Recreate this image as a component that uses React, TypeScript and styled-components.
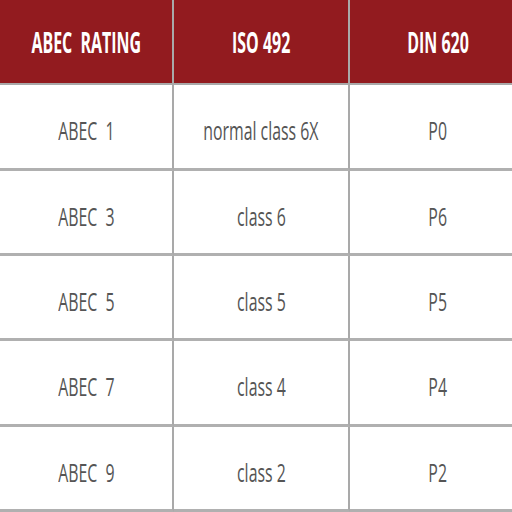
import styled, { createGlobalStyle } from "styled-components";

const GlobalStyle = createGlobalStyle`
  html, body {
    margin: 0;
    padding: 0;
    background: #ffffff;
    overflow: hidden;
  }
`;

const Viewport = styled.div`
  width: 512px;
  height: 512px;
  overflow: hidden;
`;

const Table = styled.div`
  display: grid;
  grid-template-columns: 174px 176px 176px;
  grid-auto-rows: 85.33px;
  width: 526px;
  font-family: "Open Sans", "Liberation Sans", sans-serif;
`;

const HeadCell = styled.div<{ $last?: boolean }>`
  display: flex;
  align-items: center;
  justify-content: center;
  background: #921b1f;
  color: #ffffff;
  font-size: 28px;
  font-weight: 700;
  border-right: ${(p) => (p.$last ? "none" : "2px solid #a9a9a9")};
  border-bottom: 2px solid #a9a9a9;
  box-sizing: border-box;
`;

const Cell = styled.div<{ $last?: boolean }>`
  display: flex;
  align-items: center;
  justify-content: center;
  padding-top: 8px;
  background: #ffffff;
  color: #555555;
  font-size: 25px;
  font-weight: 400;
  border-right: ${(p) => (p.$last ? "none" : "2px solid #a9a9a9")};
  border-bottom: 3px solid #b0b0b0;
  box-sizing: border-box;
`;

const Label = styled.span<{ $squeeze: number }>`
  display: inline-block;
  white-space: pre;
  transform: scaleX(${(p) => p.$squeeze});
`;

const headers = ["ABEC  RATING", "ISO 492", "DIN 620"];

const rows = [
  ["ABEC  1", "normal class 6X", "P0"],
  ["ABEC  3", "class 6", "P6"],
  ["ABEC  5", "class 5", "P5"],
  ["ABEC  7", "class 4", "P4"],
  ["ABEC  9", "class 2", "P2"],
];

export default function App() {
  return (
    <Viewport>
      <GlobalStyle />
      <Table>
        {headers.map((h, i) => (
          <HeadCell key={h} $last={i === headers.length - 1}>
            <Label $squeeze={0.57}>{h}</Label>
          </HeadCell>
        ))}
        {rows.map((r) =>
          r.map((c, i) => (
            <Cell key={r[0] + i} $last={i === r.length - 1}>
              <Label $squeeze={0.635}>{c}</Label>
            </Cell>
          ))
        )}
      </Table>
    </Viewport>
  );
}
